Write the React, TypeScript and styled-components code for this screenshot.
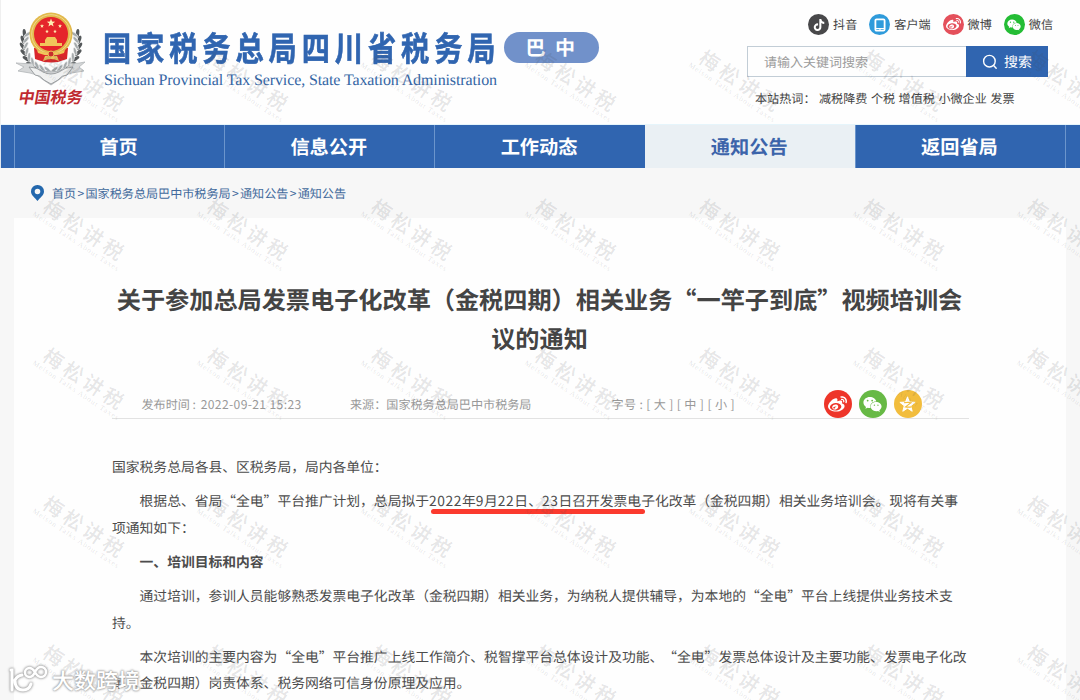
import React from "react";
import styled, { createGlobalStyle, css } from "styled-components";
import { FaTiktok, FaWeibo, FaWeixin } from "react-icons/fa";

const BLUE = "#3065b0";

const Global = createGlobalStyle`
  * { box-sizing: border-box; }
  body {
    margin: 0;
    overflow: hidden;
    font-family: "Noto Sans CJK SC", "Liberation Sans", sans-serif;
    text-rendering: geometricPrecision;
    text-spacing-trim: space-all;
    background: #f7f7f7;
  }
  p, h1, h2 { margin: 0; }
`;

const Page = styled.div`
  position: relative;
  width: 1080px;
  height: 700px;
  overflow: hidden;
  background: #f7f7f7;
`;

const Header = styled.header`
  display: flex;
  height: 125px;
  background: #fefefe;
  border-left: 1px solid #efefef;
  border-bottom: 1px solid #e6f5fb;
`;

const Emblem = styled.div`
  display: flex;
  flex-direction: column;
  align-items: center;
  width: 74px;
  margin: 10px 0 0 13px;
`;

const EmblemCaption = styled.div`
  margin-top: -3px;
  font-size: 16px;
  line-height: 22px;
  font-weight: 700;
  white-space: nowrap;
  color: #c02a30;
  transform: skewX(-10deg);
`;

const Brand = styled.div`
  width: 396px;
  margin: 26px 0 0 15px;
`;

const BrandName = styled.h1`
  font-size: 34px;
  line-height: 42px;
  letter-spacing: 5.9px;
  font-weight: 700;
  white-space: nowrap;
  color: ${BLUE};
  -webkit-text-stroke: 0.6px ${BLUE};
  transform: scaleX(0.83);
  transform-origin: left;
`;

const BrandLatin = styled.div`
  margin: 3px 0 0 1px;
  font: 16px/20px "Liberation Serif", serif;
  letter-spacing: -0.12px;
  white-space: nowrap;
  color: #3566a5;
`;

const CityPill = styled.div`
  width: 95px;
  height: 31px;
  margin: 32px 0 0 4.5px;
  padding-left: 22px;
  border-radius: 16px;
  background: #7191ca;
  color: #fff;
  font-size: 20px;
  line-height: 30px;
  letter-spacing: 9.5px;
  font-weight: 700;
  white-space: nowrap;
`;

const Tools = styled.div`
  width: 306px;
  margin: 14px 27px 0 auto;
`;

const Channels = styled.div`
  display: flex;
  justify-content: flex-end;
  height: 21px;
`;

const Channel = styled.div<{ $gap: number }>`
  display: flex;
  align-items: center;
  gap: 4px;
  margin-left: ${(p) => p.$gap}px;
  font-size: 12.1px;
  line-height: 20px;
  color: #444;
`;

const Disc = styled.span<{ $color: string; $size: number }>`
  display: flex;
  align-items: center;
  justify-content: center;
  width: ${(p) => p.$size}px;
  height: ${(p) => p.$size}px;
  border-radius: 50%;
  background: ${(p) => p.$color};
  color: #fff;
`;

const SearchBar = styled.div`
  display: flex;
  width: 301px;
  height: 31px;
  margin-top: 11px;
  border: 1px solid #c2cdd6;
  border-right: 0;
`;

const SearchField = styled.div`
  flex: 1;
  padding-left: 16px;
  font-size: 13px;
  line-height: 30px;
  color: #9b9b9b;
`;

const SearchButton = styled.div`
  display: flex;
  align-items: center;
  gap: 6px;
  width: 82px;
  margin: -1px 0;
  padding-left: 16px;
  background: ${BLUE};
  color: #fff;
  font-size: 14px;
`;

const HotWords = styled.div`
  display: flex;
  gap: 3.5px;
  margin: 12px 0 0 8px;
  font-size: 12.1px;
  line-height: 20px;
  color: #444;
  white-space: nowrap;
`;

const HotLabel = styled.span`
  width: 60.5px;
`;

const Nav = styled.nav`
  display: flex;
  height: 43px;
  padding: 0 14px 0 13px;
  border-left: 1px solid #dfe6ee;
  background: ${BLUE};
`;

const NavItem = styled.div<{ $active?: boolean }>`
  flex: 1;
  padding-right: 2px;
  border-left: 1px solid #6b95cc;
  font-size: 19.2px;
  line-height: 43px;
  font-weight: 700;
  text-align: center;
  color: #fff;
  &:last-child { border-right: 1px solid #6b95cc; }
  ${(p) =>
    p.$active &&
    css`
      background: #eaf0f4;
      border-color: #eaf0f4;
      color: #3c64aa;
    `}
`;

const Crumbs = styled.div`
  display: flex;
  align-items: center;
  height: 50px;
  padding-left: 31px;
  font-size: 12.1px;
  color: #426a9c;
  svg { margin-right: 8px; }
`;

const CrumbArrow = styled.span`
  margin: 0 1.3px;
`;

const Panel = styled.main`
  height: 482px;
  margin: 0 14px;
  padding: 61px 97px 0 98px;
  background: #fefefe;
`;

const Title = styled.h2`
  width: 855px;
  font-size: 24.17px;
  line-height: 39px;
  font-weight: 700;
  text-align: center;
  color: #444;
`;

const Meta = styled.div`
  display: flex;
  height: 62px;
  padding: 33px 0 0 29.5px;
  border-bottom: 1px solid #e2e2e2;
  font-size: 12.1px;
  line-height: 29px;
  color: #999;
  white-space: nowrap;
`;

const MetaItem = styled.div<{ $width: number; $spacing?: number }>`
  width: ${(p) => p.$width}px;
  letter-spacing: ${(p) => p.$spacing || 0}px;
`;

const Stamped = styled.span`
  margin-left: 2px;
  letter-spacing: 0.37px;
`;

const Share = styled.div`
  display: flex;
  gap: 7px;
`;

const Article = styled.article`
  display: flex;
  flex-direction: column;
  gap: 8.2px;
  margin-top: 34px;
  font-size: 13.79px;
  line-height: 26.2px;
  color: #4c4c4c;
`;

const Para = styled.p<{ $flush?: boolean; $bold?: boolean }>`
  text-indent: ${(p) => (p.$flush ? 0 : "2em")};
  font-weight: ${(p) => (p.$bold ? 700 : 400)};
`;

const Marked = styled.span`
  position: relative;
  &::after {
    content: "";
    position: absolute;
    left: 2px;
    right: -4px;
    bottom: -4px;
    height: 5px;
    border-radius: 3px;
    background: #fb3a2e;
  }
`;

const Num = styled.span`
  letter-spacing: 0.6px;
`;

const Overlay = styled.div`
  position: absolute;
  inset: 0;
  display: grid;
  grid-template-columns: repeat(7, 164px);
  grid-auto-rows: 148.8px;
  padding: 44px 0 0 48px;
  overflow: hidden;
  pointer-events: none;
`;

const Stamp = styled.div`
  transform: rotate(33.5deg);
  transform-origin: 6px 15px;
  white-space: nowrap;
  color: rgba(70, 75, 80, 0.15);
  width: 110px;
  margin-left: -4px;
  b {
    display: block;
    font-size: 20px;
    line-height: 28px;
    letter-spacing: 3.8px;
    font-weight: 500;
  }
  i {
    display: block;
    margin: -4px 0 0 -5px;
    font: 7.5px/9px "Liberation Serif", serif;
    letter-spacing: 0.95px;
  }
`;

const SourceMark = styled.div`
  position: absolute;
  left: 8px;
  top: 664px;
  display: flex;
  align-items: center;
  gap: 3px;
  height: 32px;
  font-size: 22px;
  font-weight: 500;
  color: #fff;
  white-space: nowrap;
  text-shadow: 0 0 2px #999, 0 0 2px #aaa, 0 0 3px #bbb;
  svg { margin-top: -3px; filter: drop-shadow(0 0 1px #999) drop-shadow(0 0 1px #bbb); }
`;

const starPoints = (cx: number, cy: number, r: number) =>
  Array.from({ length: 10 }, (_, i) => {
    const a = (Math.PI * i) / 5 - Math.PI / 2;
    const k = i % 2 ? r * 0.42 : r;
    return `${(cx + k * Math.cos(a)).toFixed(2)},${(cy + k * Math.sin(a)).toFixed(2)}`;
  }).join(" ");

function EmblemArt() {
  const leaves = Array.from({ length: 9 }, (_, i) => {
    const a = ((100 + i * 13) * Math.PI) / 180;
    return { x: 37 + 26.5 * Math.cos(a), y: 34 + 27 * Math.sin(a), r: 100 + i * 13 };
  });
  const side = leaves.map((l, i) => (
    <g key={i} transform={`translate(${l.x} ${l.y}) rotate(${l.r})`}>
      <ellipse cx="2.4" cy="0" rx="1.7" ry="4.2" fill="#55595b" transform="rotate(-30)" />
      <ellipse cx="-1.5" cy="0" rx="1.5" ry="4" fill="#a5aaac" stroke="#f3f3f3" strokeWidth=".6" transform="rotate(30)" />
    </g>
  ));
  return (
    <svg width="74" height="78" viewBox="0 0 74 78">
      {side}
      <g transform="translate(74 0) scale(-1 1)">{side}</g>
      <path d="M20 38h34l-1 11q-16 7-32 0z" fill="#d9262b" />
      <circle cx="37" cy="24" r="21.5" fill="#e2b94c" />
      <circle cx="37" cy="24" r="19.3" fill="none" stroke="#f2d98b" strokeWidth="1" />
      <circle cx="37" cy="24" r="17" fill="#e5252b" />
      <g fill="#fff0b4">
        <polygon points={starPoints(37, 13, 4.4)} />
        <polygon points={starPoints(28, 16, 2.1)} />
        <polygon points={starPoints(46, 16, 2.1)} />
        <polygon points={starPoints(33, 21.5, 1.9)} />
        <polygon points={starPoints(41, 21.5, 1.9)} />
      </g>
      <path d="M31 30l2-3h8l2 3v3h5v3H26v-3h5z" fill="#f1c65a" />
      <path d="M21 38q3 5 16 5t16-5l-1 6q-4 3-10 3h-10q-6 0-10-3z" fill="#dc262b" />
      <path d="M23 40q14 6 28 0l-1 3q-13 5-26 0z" fill="#f1c65a" />
      <path d="M31 46h12l2 5q-8-4-16 0z" fill="#edc45d" />
      <circle cx="37" cy="44" r="3" fill="#d92a2a" stroke="#f1c65a" />
      <path d="M2 53q10 1 16 0l4 6q15 6 30 0l4-6q8 1 15-1l-6 5 5 4-12 2q-8 1-12 6l-9 6-9-6q-4-5-12-6l-12-2 6-4z" fill="#d5d7d8" stroke="#b1b5b7" strokeWidth=".8" />
      <path d="M15 57q8 0 14 5 8 4 16 0 6-5 14-5l-6 8q-5 0-9 5l-7 4-7-4q-4-5-9-5z" fill="#f0f1f1" stroke="#8a8e90" strokeWidth=".8" />
    </svg>
  );
}

const TabletGlyph = () => (
  <svg width="12" height="14" viewBox="0 0 12 14" fill="none" stroke="#fff">
    <rect x="1.4" y="1.4" width="9.2" height="11.2" rx="1.2" strokeWidth="1.8" />
    <path d="M2 10.5h8M5.2 11.8h1.6" strokeWidth="1" />
  </svg>
);

const SearchGlyph = () => (
  <svg width="16" height="16" viewBox="0 0 16 16" fill="none" stroke="#fff" strokeWidth="1.4" strokeLinecap="round">
    <circle cx="7.4" cy="7.2" r="5.8" />
    <path d="M11.6 11.5l2.6 2.8" />
  </svg>
);

const PinGlyph = () => (
  <svg width="13" height="16" viewBox="0 0 13 16">
    <path fillRule="evenodd" fill="#2468ad" d="M6.5 0A6.4 6.4 0 0 0 0 6.4C0 10.5 4.3 12.7 6.5 16 8.7 12.7 13 10.5 13 6.4A6.4 6.4 0 0 0 6.5 0zm0 3.7a2.8 2.8 0 1 1 0 5.6 2.8 2.8 0 0 1 0-5.6z" />
  </svg>
);

const QzoneGlyph = () => (
  <svg width="19" height="19" viewBox="0 0 19 19">
    <polygon points={starPoints(9.5, 9.8, 8)} fill="#fff" stroke="#fff" strokeWidth="1" strokeLinejoin="round" />
    <path d="M6 7.7q4-.7 7 0l-5.5 4.2q3 .5 6 0" fill="none" stroke="#f2bd3d" strokeWidth="1.1" />
  </svg>
);

const SourceGlyph = () => (
  <svg width="41" height="30" viewBox="0 0 41 30" fill="none" stroke="#fff" strokeWidth="3" strokeLinecap="round">
    <path d="M3 6h1v20M14 11q-5 1-7 5 0 10 8 10 6 0 8-6" />
    <path d="M27 8c-2-3-3.500-4-5.500-4a4.500 4.500 0 0 0 0 9c3 0 4-2 5.500-5s3-5 6-5a4.500 4.500 0 0 1 0 10c-3 0-4.500-2-6-5z" strokeWidth="2.500" />
  </svg>
);

const navItems = ["首页", "信息公开", "工作动态", "通知公告", "返回省局"];
const hotWords = ["减税降费", "个税", "增值税", "小微企业", "发票"];
const crumbs = ["首页", "国家税务总局巴中市税务局", "通知公告", "通知公告"];

export default function App() {
  return (
    <Page>
      <Global />
      <Header>
        <Emblem>
          <EmblemArt />
          <EmblemCaption>中国税务</EmblemCaption>
        </Emblem>
        <Brand>
          <BrandName>国家税务总局四川省税务局</BrandName>
          <BrandLatin>Sichuan Provincial Tax Service, State Taxation Administration</BrandLatin>
        </Brand>
        <CityPill>巴中</CityPill>
        <Tools>
          <Channels>
            <Channel $gap={0}><Disc $size={21} $color="#48484a"><FaTiktok size={12} /></Disc>抖音</Channel>
            <Channel $gap={12}><Disc $size={21} $color="#2f9bdb"><TabletGlyph /></Disc>客户端</Channel>
            <Channel $gap={12}><Disc $size={21} $color="#e4505b"><FaWeibo size={15} /></Disc>微博</Channel>
            <Channel $gap={12}><Disc $size={21} $color="#24bd35"><FaWeixin size={14} /></Disc>微信</Channel>
          </Channels>
          <SearchBar>
            <SearchField>请输入关键词搜索</SearchField>
            <SearchButton><SearchGlyph />搜索</SearchButton>
          </SearchBar>
          <HotWords>
            <HotLabel>本站热词：</HotLabel>
            {hotWords.map((w) => <span key={w}>{w}</span>)}
          </HotWords>
        </Tools>
      </Header>
      <Nav>
        {navItems.map((n) => <NavItem key={n} $active={n === "通知公告"}>{n}</NavItem>)}
      </Nav>
      <Crumbs>
        <PinGlyph />
        {crumbs.map((c, i) => (
          <React.Fragment key={i}>
            {i > 0 && <CrumbArrow>&gt;</CrumbArrow>}
            <span>{c}</span>
          </React.Fragment>
        ))}
      </Crumbs>
      <Panel>
        <Title>关于参加总局发票电子化改革（金税四期）相关业务“一竿子到底”视频培训会议的通知</Title>
        <Meta>
          <MetaItem $width={208.5}>发布时间 : <Stamped>2022-09-21 15:23</Stamped></MetaItem>
          <MetaItem $width={261.5}>来源：国家税务总局巴中市税务局</MetaItem>
          <MetaItem $width={212} $spacing={0.36}>字号 : [ 大 ] [ 中 ] [ 小 ]</MetaItem>
          <Share>
            <Disc $size={28} $color="#ee3529"><FaWeibo size={19} /></Disc>
            <Disc $size={28} $color="#67b945"><FaWeixin size={19} /></Disc>
            <Disc $size={28} $color="#f2bd3d"><QzoneGlyph /></Disc>
          </Share>
        </Meta>
        <Article>
          <Para $flush>国家税务总局各县、区税务局，局内各单位：</Para>
          <Para>
            根据总、省局“全电”平台推广计划，总局拟于
            <Marked><Num>2022</Num>年<Num>9</Num>月<Num>22</Num>日、<Num>23</Num>日召开发票电</Marked>
            子化改革（金税四期）相关业务培训会。现将有关事项通知如下：
          </Para>
          <Para $bold>一、培训目标和内容</Para>
          <Para>通过培训，参训人员能够熟悉发票电子化改革（金税四期）相关业务，为纳税人提供辅导，为本地的“全电”平台上线提供业务技术支持。</Para>
          <Para>本次培训的主要内容为“全电”平台推广上线工作简介、税智撑平台总体设计及功能、“全电”发票总体设计及主要功能、发票电子化改革（金税四期）岗责体系、税务网络可信身份原理及应用。</Para>
        </Article>
      </Panel>
      <Overlay aria-hidden>
        {Array.from({ length: 35 }, (_, i) => (
          <Stamp key={i}><b>梅松讲税</b><i>Meison Talks About Taxes</i></Stamp>
        ))}
      </Overlay>
      <SourceMark><SourceGlyph />大数跨境</SourceMark>
    </Page>
  );
}
